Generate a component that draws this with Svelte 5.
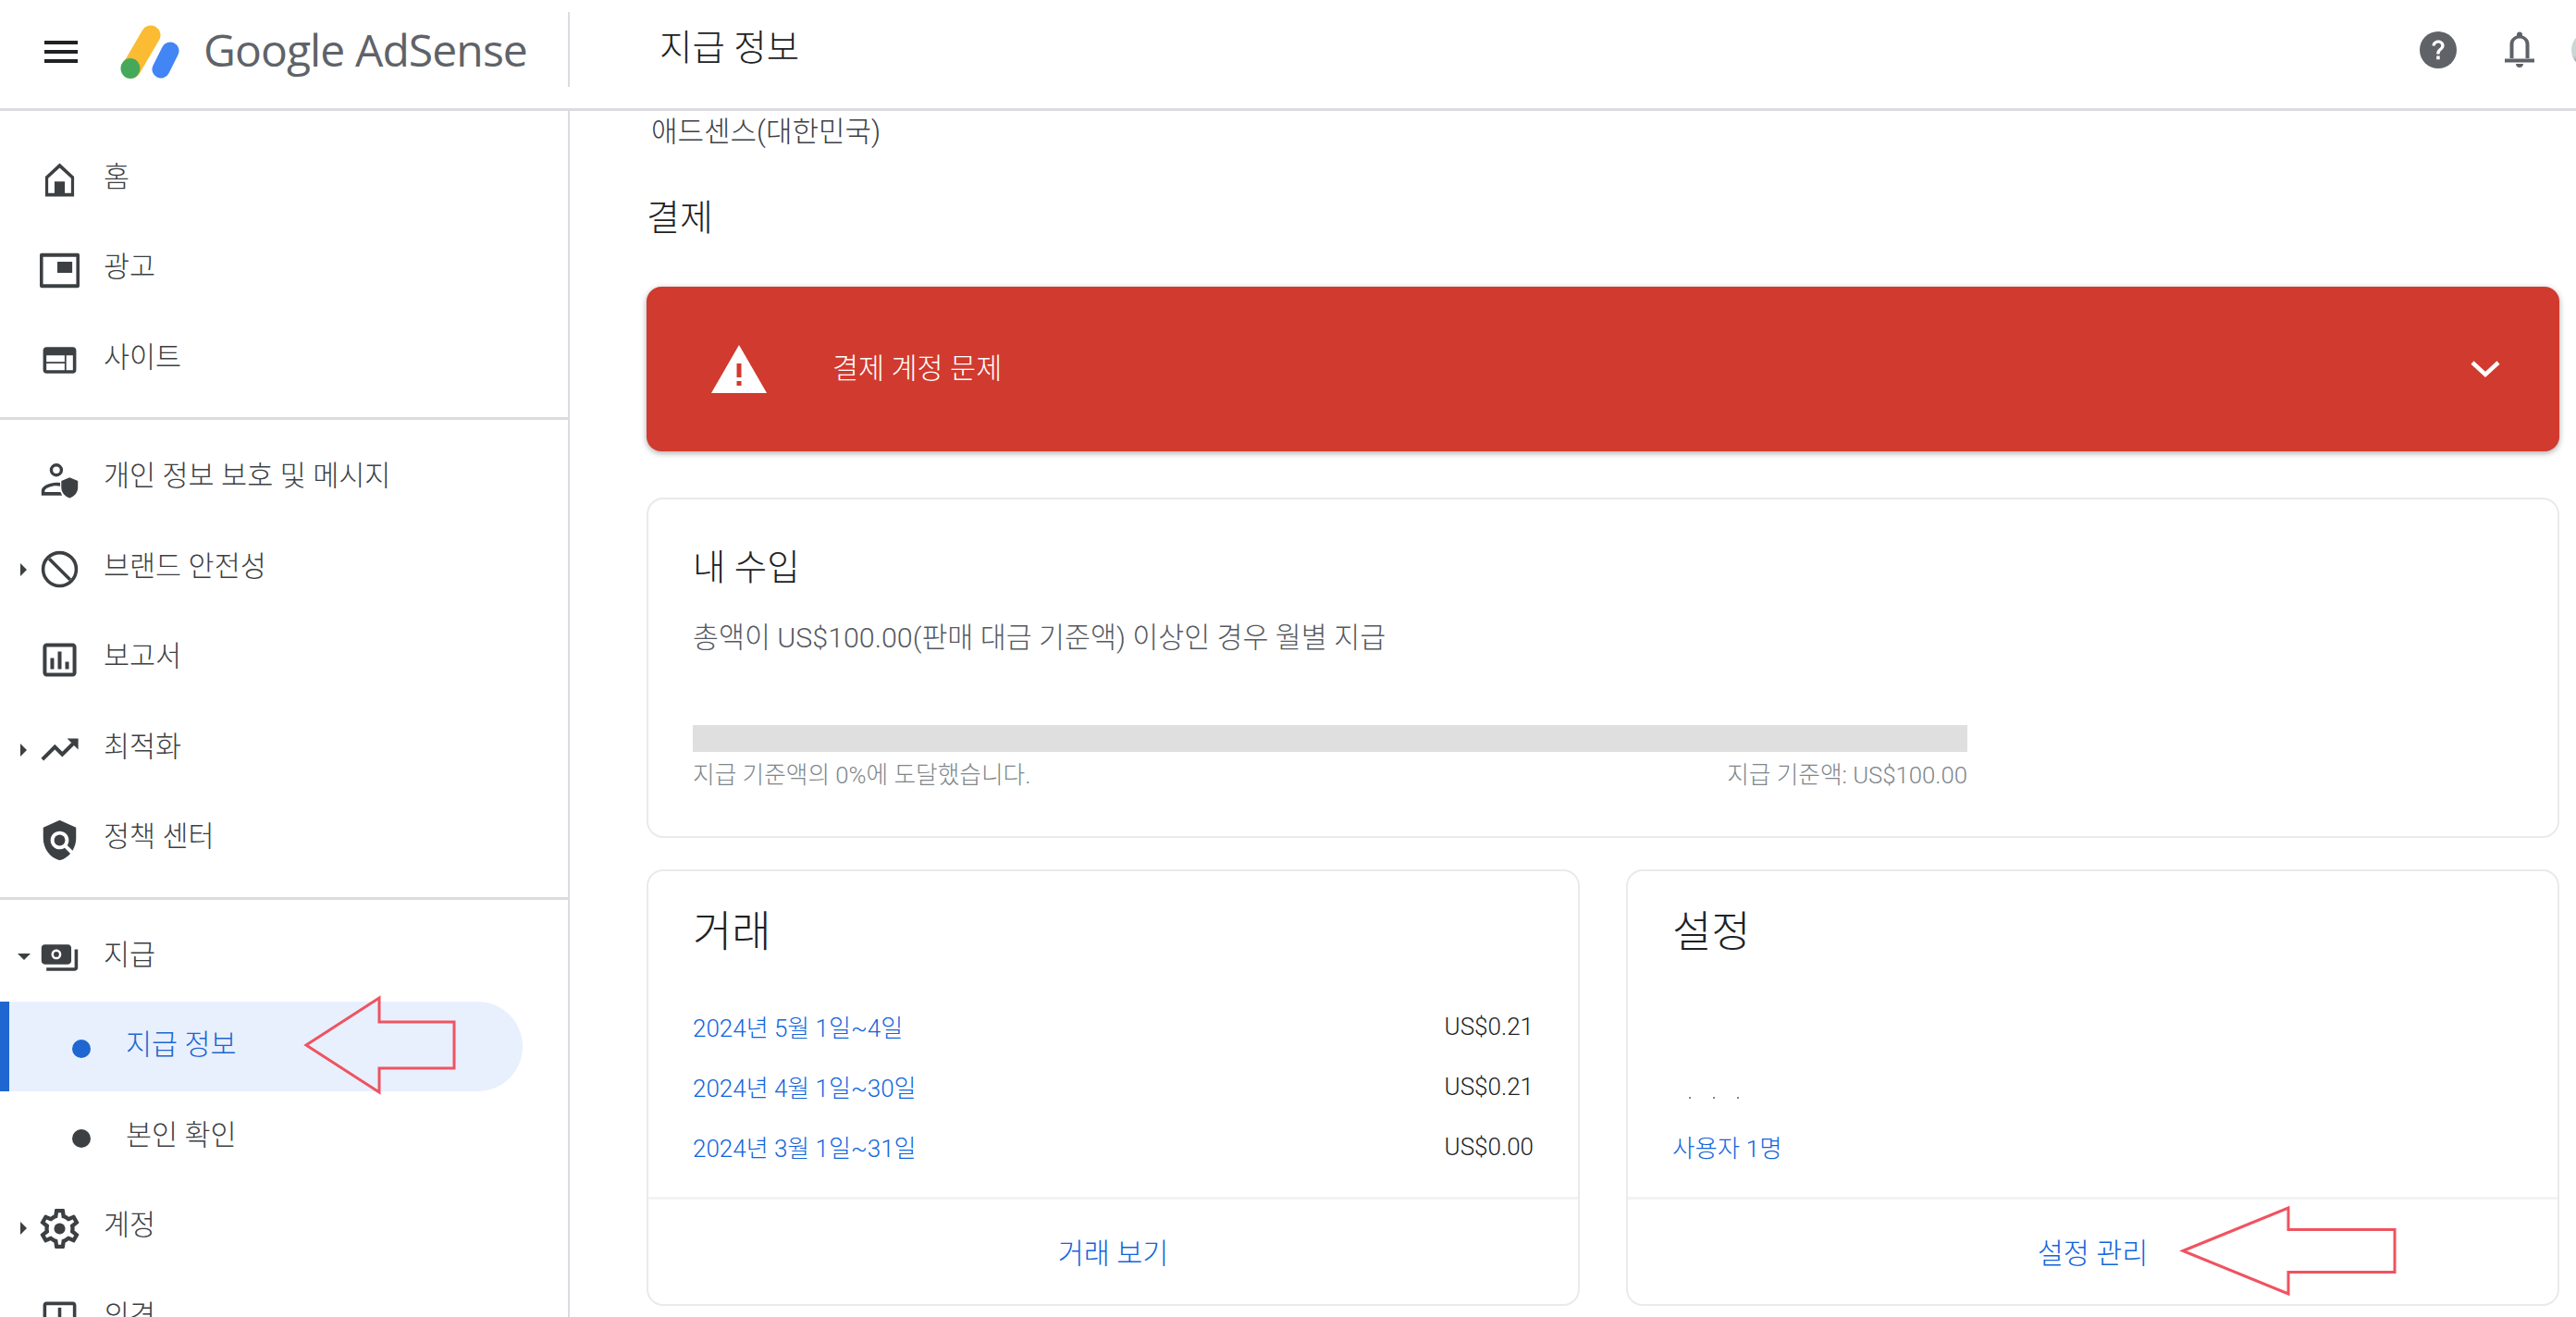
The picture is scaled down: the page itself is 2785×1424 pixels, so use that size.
<script>
  const G1 = [
    { label: '홈', icon: 'home' },
    { label: '광고', icon: 'ads' },
    { label: '사이트', icon: 'web' }
  ];
  const G2 = [
    { label: '개인 정보 보호 및 메시지', icon: 'privacy' },
    { label: '브랜드 안전성', icon: 'block', caret: 'right' },
    { label: '보고서', icon: 'report' },
    { label: '최적화', icon: 'trend', caret: 'right' },
    { label: '정책 센터', icon: 'policy' }
  ];
  const tx = [
    ['2024년 5월 1일~4일', 'US$0.21'],
    ['2024년 4월 1일~30일', 'US$0.21'],
    ['2024년 3월 1일~31일', 'US$0.00']
  ];
  const boxes = {
    gear: '2 2 20 20',
    trend: '1.3 1.3 21.4 21.4',
    report: '1.3 1.3 21.4 21.4',
    policy: '1.1 1.1 21.8 21.8'
  };
</script>

{#snippet icon(name)}
  <svg class="ico" viewBox={boxes[name] ?? '0 0 24 24'} aria-hidden="true">
    {#if name === 'home'}
      <path fill-rule="evenodd" d="M12 2l8.700 8V22H3.300V10zM12 4.700L5.100 11v9h3.800v-7h6.200v7h3.800v-9z"/>
    {:else if name === 'ads'}
      <path fill-rule="evenodd" d="M1 1.600h22a1 1 0 0 1 1 1v18.800a1 1 0 0 1-1 1H1a1 1 0 0 1-1-1V2.600a1 1 0 0 1 1-1zm1 2.200v16.400h20V3.800z"/>
      <rect x="10.600" y="6.700" width="9" height="6.700"/>
    {:else if name === 'web'}
      <path d="M20 4H4c-1.100 0-1.990.900-1.990 2L2 18c0 1.100.900 2 2 2h16c1.100 0 2-.900 2-2V6c0-1.100-.900-2-2-2zm-5 14H4v-4h11v4zm0-5H4V9h11v4zm5 5h-4V9h4v9z"/>
    {:else if name === 'privacy'}
      <path fill-rule="evenodd" d="M10 2.300a4 4 0 1 1 0 8 4 4 0 0 1 0-8zm0 1.900a2.100 2.100 0 1 0 0 4.200 2.100 2.100 0 0 0 0-4.200z"/>
      <path d="M1 21.600v-2.800c0-3 5-5 9-5 .8 0 1.600.1 2.300.2v2c-.7-.2-1.500-.3-2.300-.3-3 0-7 1.400-7 3.100v.8h9.500l1 2z"/>
      <path d="M18 10.800l5 2v4c0 3-2.100 5.500-5 6.400-2.900-.9-5-3.400-5-6.400v-4z"/>
    {:else if name === 'block'}
      <circle cx="12" cy="12" r="10" fill="none" stroke="currentColor" stroke-width="2"/>
      <path d="M5.700 5.700l12.600 12.600" fill="none" stroke="currentColor" stroke-width="2"/>
    {:else if name === 'report'}
      <path d="M19 3H5c-1.100 0-2 .900-2 2v14c0 1.100.900 2 2 2h14c1.100 0 2-.900 2-2V5c0-1.100-.900-2-2-2zm0 16H5V5h14v14z"/>
      <path d="M7 11h2v6H7zM11 7.500h2V17h-2zM15 13h2v4h-2z"/>
    {:else if name === 'trend'}
      <path d="M16 6l2.290 2.290-4.880 4.880-4-4L2 16.590 3.410 18l6-6 4 4 6.300-6.290L22 12V6z"/>
    {:else if name === 'policy'}
      <path d="M21 5l-9-4-9 4v6c0 5.550 3.840 10.740 9 12 2.300-.56 4.330-1.900 5.880-3.710l-3.120-3.120c-1.940 1.290-4.580 1.070-6.290-.64-1.950-1.950-1.950-5.120 0-7.070 1.950-1.950 5.120-1.950 7.070 0 1.710 1.710 1.920 4.350.64 6.290l2.900 2.900C20.290 15.690 21 13.380 21 11V5z"/>
      <circle cx="12" cy="12" r="3"/>
    {:else if name === 'pay'}
      <path d="M19 14V6c0-1.100-.900-2-2-2H3c-1.100 0-2 .900-2 2v8c0 1.100.900 2 2 2h14c1.100 0 2-.900 2-2zm-9-1c-1.660 0-3-1.340-3-3s1.340-3 3-3 3 1.340 3 3-1.340 3-3 3zm13-6v11c0 1.100-.900 2-2 2H4v-2h17V7h2z"/>
      <circle cx="10" cy="10" r="1.600"/>
    {:else if name === 'gear'}
      <path d="M19.430 12.980c.04-.32.07-.64.07-.98 0-.34-.03-.66-.07-.98l2.110-1.650c.19-.15.24-.42.12-.64l-2-3.460c-.09-.16-.26-.25-.44-.25-.06 0-.12.01-.17.03l-2.490 1c-.52-.4-1.080-.73-1.690-.98l-.38-2.650C14.460 2.180 14.250 2 14 2h-4c-.25 0-.46.18-.49.42l-.38 2.650c-.61.25-1.170.59-1.690.98l-2.490-1c-.06-.02-.12-.03-.18-.03-.17 0-.34.09-.43.25l-2 3.460c-.13.22-.07.49.12.64l2.110 1.650c-.04.32-.07.65-.07.98 0 .33.03.66.07.98l-2.110 1.650c-.19.15-.24.42-.12.64l2 3.460c.09.16.26.25.44.25.06 0 .12-.01.17-.03l2.490-1c.52.4 1.080.73 1.690.98l.38 2.650c.03.24.24.42.49.42h4c.25 0 .46-.18.49-.42l.38-2.650c.61-.25 1.170-.59 1.690-.98l2.490 1c.06.02.12.03.18.03.17 0 .34-.09.43-.25l2-3.460c.12-.22.07-.49-.12-.64l-2.110-1.650zm-1.980-1.710c.04.31.05.52.05.73 0 .21-.02.43-.05.73l-.14 1.130.89.7 1.080.84-.7 1.210-1.270-.51-1.040-.42-.9.68c-.43.32-.84.56-1.250.73l-1.060.43-.16 1.130-.2 1.350h-1.400l-.19-1.350-.16-1.130-1.060-.43c-.43-.18-.83-.41-1.230-.71l-.91-.7-1.060.43-1.270.51-.7-1.210 1.080-.84.89-.7-.14-1.130c-.03-.31-.05-.54-.05-.74s.02-.43.05-.73l.14-1.130-.89-.7-1.080-.84.7-1.210 1.270.51 1.040.42.9-.68c.43-.32.84-.56 1.250-.73l1.060-.43.16-1.130.2-1.350h1.390l.19 1.350.16 1.130 1.060.43c.43.18.83.41 1.230.71l.91.7 1.060-.43 1.270-.51.7 1.210-1.070.85-.89.7.14 1.130z"/>
      <circle cx="12" cy="12" r="2.800"/>
    {:else if name === 'feedback'}
      <path fill-rule="evenodd" d="M20 2H4c-1.100 0-2 .900-2 2v18l4-4h14c1.100 0 2-.900 2-2V4c0-1.100-.900-2-2-2zm0 14H5.200L4 17.200V4h16z"/>
      <path d="M11 5.500h2v6h-2z"/>
    {/if}
  </svg>
{/snippet}

{#snippet row(item)}
  <div class="row" class:first={item.first}>
    <span class="caret">
      {#if item.caret === 'right'}<i class="tri-right"></i>{/if}
      {#if item.caret === 'down'}<i class="tri-down"></i>{/if}
    </span>
    {@render icon(item.icon)}
    <span class="label">{item.label}</span>
  </div>
{/snippet}

<div class="app">
  <header class="top">
    <svg class="menu" viewBox="0 0 36 24" aria-hidden="true"><path d="M0 0h36v4H0zM0 10h36v4H0zM0 20h36v4H0z"/></svg>
    <svg class="mark" viewBox="0 0 66 60" aria-hidden="true">
      <path d="M33 11L12 47" stroke="#fbbc33" stroke-width="21" stroke-linecap="round" fill="none"/>
      <path d="M54 28L44 48" stroke="#4285f4" stroke-width="19" stroke-linecap="round" fill="none"/>
      <ellipse cx="11" cy="47" rx="10.500" ry="11" fill="#46a85a"/>
    </svg>
    <div class="brand">Google AdSense</div>
    <div class="vr"></div>
    <h1>지급 정보</h1>
    <div class="top-right">
      <svg class="help" viewBox="0 0 40 40" aria-hidden="true">
        <circle cx="20" cy="20" r="20" fill="#5f6368"/>
        <path d="M13.500 15.500c0-3.500 3-6 6.600-6 3.800 0 6.500 2.500 6.500 5.700 0 4.500-5 4.800-5 9.300h-3.400c0-6 5-6 5-9.200 0-1.500-1.300-2.700-3.100-2.700s-3.200 1.300-3.200 2.900zM18.200 26.500h3.500v3.800h-3.500z" fill="#fff"/>
      </svg>
      <svg class="bell" viewBox="0 0 32 40" aria-hidden="true">
        <path fill-rule="evenodd" d="M0 29.500h32v4H0zM13 3.500a3 3 0 0 1 6 0v1c4.500 1.300 7.500 5 7.500 9.500v16h-4V14c0-4-2.500-6.500-6.500-6.500S9.500 10 9.500 14v16h-4V14c0-4.500 3-8.200 7.500-9.500zM12 35h8c0 2.500-1.800 4-4 4s-4-1.500-4-4z" fill="#5f6368"/>
      </svg>
      <div class="avatar"></div>
    </div>
  </header>

  <div class="body">
    <nav class="side">
      <div class="group g1">
        {#each G1 as item}{@render row(item)}{/each}
      </div>
      <div class="group g2">
        {#each G2 as item}{@render row(item)}{/each}
      </div>
      <div class="group g3">
        {@render row({ label: '지급', icon: 'pay', caret: 'down', first: true })}
        <div class="sub active"><i class="dot"></i><span class="label">지급 정보</span></div>
        <div class="sub verify"><i class="dot"></i><span class="label">본인 확인</span></div>
        {@render row({ label: '계정', icon: 'gear', caret: 'right' })}
        {@render row({ label: '의견', icon: 'feedback' })}
      </div>
    </nav>

    <main class="main">
      <p class="org">애드센스(대한민국)</p>
      <h2 class="section">결제</h2>

      <div class="alert">
        <svg class="warn" viewBox="0 0 60 52" aria-hidden="true">
          <path d="M30 0l30 52H0z" fill="#fff"/>
          <path d="M27.500 20h5v15h-5zM27.500 39h5v5h-5z" fill="#d13a2e"/>
        </svg>
        <span class="alert-text">결제 계정 문제</span>
        <svg class="chev" viewBox="0 0 32 20" aria-hidden="true"><path d="M2 3l14 13L30 3" fill="none" stroke="#fff" stroke-width="4.500"/></svg>
      </div>

      <section class="card income">
        <h3>내 수입</h3>
        <p class="desc">총액이 US$100.00(판매 대금 기준액) 이상인 경우 월별 지급</p>
        <div class="bar"></div>
        <div class="bar-caps"><span>지급 기준액의 0%에 도달했습니다.</span><span>지급 기준액: US$100.00</span></div>
      </section>

      <div class="cards">
        <section class="card half">
          <div class="card-body">
            <h3 class="big">거래</h3>
            <ul class="tx">
              {#each tx as t}
                <li><span class="link">{t[0]}</span><span class="amt">{t[1]}</span></li>
              {/each}
            </ul>
          </div>
          <div class="card-foot link">거래 보기</div>
        </section>
        <section class="card half">
          <div class="card-body">
            <h3 class="big">설정</h3>
            <div class="dots"><i></i><i></i><i></i></div>
            <div class="users link">사용자 1명</div>
          </div>
          <div class="card-foot link">설정 관리</div>
        </section>
      </div>
    </main>
  </div>

  <svg class="arrow a1" viewBox="0 0 165 106" aria-hidden="true">
    <path d="M2 53L81 2v26h81v50H81v26z" fill="none" stroke="#ef5360" stroke-width="3"/>
  </svg>
  <svg class="arrow a2" viewBox="0 0 233 97" aria-hidden="true">
    <path d="M2 48.500L116 2v23.500h115v46H116V95z" fill="none" stroke="#ef5360" stroke-width="3"/>
  </svg>
</div>

<style>
  :global(body) { margin: 0; background: #fff; }
  .app {
    position: relative;
    width: 2785px;
    height: 1424px;
    overflow: hidden;
    background: #fff;
    font-family: Roboto, "Noto Sans CJK KR", sans-serif;
    color: #3c4043;
    font-size: 30.500px;
    font-weight: 300;
  }
  h1, h2, h3, p, ul { margin: 0; padding: 0; font-weight: 300; }
  i { display: block; }

  .top {
    height: 117px;
    border-bottom: 3px solid #dadce0;
    display: flex;
    align-items: center;
    overflow: hidden;
  }
  .menu { width: 36px; height: 24px; margin-left: 48px; fill: #202124; flex: none; margin-bottom: 6px; }
  .mark { width: 66px; height: 60px; margin-left: 46px; margin-top: -3px; flex: none; }
  .brand {
    margin-left: 24px;
    width: 369px;
    font-size: 48px;
    letter-spacing: -0.9px;
    font-weight: 400;
    color: #5f6368;
    white-space: nowrap;
    font-family: "Open Sans", sans-serif;
    margin-bottom: 10px;
  }
  .vr { width: 2px; height: 81px; background: #dadce0; flex: none; margin-bottom: 10px; margin-left: 25px; }
  h1 { margin-left: 97px; font-size: 38.500px; color: #202124; margin-bottom: 22px; white-space: nowrap; }
  .top-right { margin-left: auto; display: flex; align-items: center; margin-right: -35px; margin-bottom: 10px; }
  .help { width: 40px; height: 40px; flex: none; }
  .bell { width: 32px; height: 40px; margin-left: 52px; flex: none; }
  .avatar { width: 40px; height: 40px; border-radius: 50%; background: linear-gradient(#cdd6d6 65%, #6d7272); margin-left: 40px; flex: none; }

  .body { display: flex; height: 1304px; }
  .side { width: 614px; flex: none; border-right: 2px solid #dadce0; overflow: hidden; }
  .group { border-bottom: 3px solid #dadce0; }
  .g1 { padding: 26px 0 12px; }
  .g2 { padding: 16px 0 13px; }
  .g3 { padding: 16px 0 0; border-bottom: 0; }
  .row { height: 97.500px; display: flex; align-items: center; padding-left: 18px; }
  .first { height: 93.500px; }
  .caret { width: 25px; flex: none; display: flex; align-items: center; justify-content: center; height: 20px; padding-right: 10px; box-sizing: border-box; }
  .tri-right { width: 0; height: 0; border-left: 7px solid #3c4043; border-top: 7px solid transparent; border-bottom: 7px solid transparent; }
  .tri-down { width: 0; height: 0; border-top: 7px solid #3c4043; border-left: 7px solid transparent; border-right: 7px solid transparent; margin-top: -2px; }
  .ico { width: 43px; height: 43px; flex: none; fill: #3c4043; color: #3c4043; }
  .row .label { margin-left: 26px; margin-bottom: 12px; white-space: nowrap; }
  .sub { height: 97.500px; width: 565px; box-sizing: border-box; display: flex; align-items: center; padding-left: 78px; }
  .verify { margin-bottom: 2px; }
  .sub .dot { width: 20px; height: 20px; border-radius: 50%; background: #3c4043; margin-top: 5px; flex: none; }
  .sub .label { margin-left: 38px; margin-bottom: 8px; white-space: nowrap; }
  .active { background: #e8f0fe; border-left: 10px solid #1e66d0; padding-left: 68px; border-radius: 0 49px 49px 0; color: #1e66d0; }
  .active .dot { background: #1e66d0; }

  .main { flex: 1; padding: 5px 18px 0 83px; min-width: 0; }
  .org { line-height: 36px; margin-left: 5px; color: #3c4043; font-size: 31px; }
  .section { font-size: 39px; line-height: 50px; margin-top: 50px; color: #202124; }
  .alert {
    margin-top: 49px;
    height: 178px;
    background: #d13a2e;
    border-radius: 16px;
    box-shadow: 0 2px 6px rgba(60, 64, 67, 0.45);
    display: flex;
    align-items: center;
    color: #fff;
  }
  .warn { width: 60px; height: 52px; margin-left: 70px; flex: none; }
  .alert-text { margin-left: 71px; margin-bottom: 6px; }
  .chev { width: 32px; height: 20px; margin-left: auto; margin-right: 64px; flex: none; }

  .card { border: 2px solid #e8eaed; border-radius: 18px; box-sizing: border-box; background: #fff; }
  .income { margin-top: 50px; height: 368px; padding: 0 48px; }
  .income h3 { font-size: 38.500px; line-height: 50px; margin-top: 49px; color: #202124; }
  .desc { line-height: 36px; margin-top: 33px; color: #55595e; font-size: 30.400px; }
  .bar { width: 1378px; height: 29px; margin-top: 76px; background: #dfdfdf; }
  .bar-caps { width: 1378px; display: flex; justify-content: space-between; margin-top: 10px; font-size: 25.700px; line-height: 30px; color: #80868b; }

  .cards { display: flex; gap: 50px; margin-top: 34px; }
  .half { flex: 1; height: 472px; display: flex; flex-direction: column; }
  .card-body { flex: 1; padding: 0 48px; min-height: 0; font-size: 26px; }
  .big { font-size: 46px; line-height: 60px; margin-top: 35px; color: #202124; }
  .tx { list-style: none; margin-top: 40px; }
  .tx li { display: flex; justify-content: space-between; height: 65px; align-items: center; }
  .link { color: #1265dc; }
  .amt { color: #202124; }
  .dots { display: flex; gap: 24px; margin-top: 149px; padding-left: 18px; height: 2px; }
  .dots i { width: 2px; height: 2px; background: #80868b; }
  .users { margin-top: 36px; line-height: 36px; font-size: 26.500px; }
  .card-foot { height: 116px; flex: none; border-top: 3px solid #f1f3f4; box-sizing: border-box; display: flex; align-items: center; justify-content: center; padding-bottom: 2px; }

  .arrow { position: absolute; overflow: visible; }
  .a1 { left: 329px; top: 1077px; width: 165px; height: 106px; }
  .a2 { left: 2358px; top: 1304px; width: 233px; height: 97px; }
</style>
